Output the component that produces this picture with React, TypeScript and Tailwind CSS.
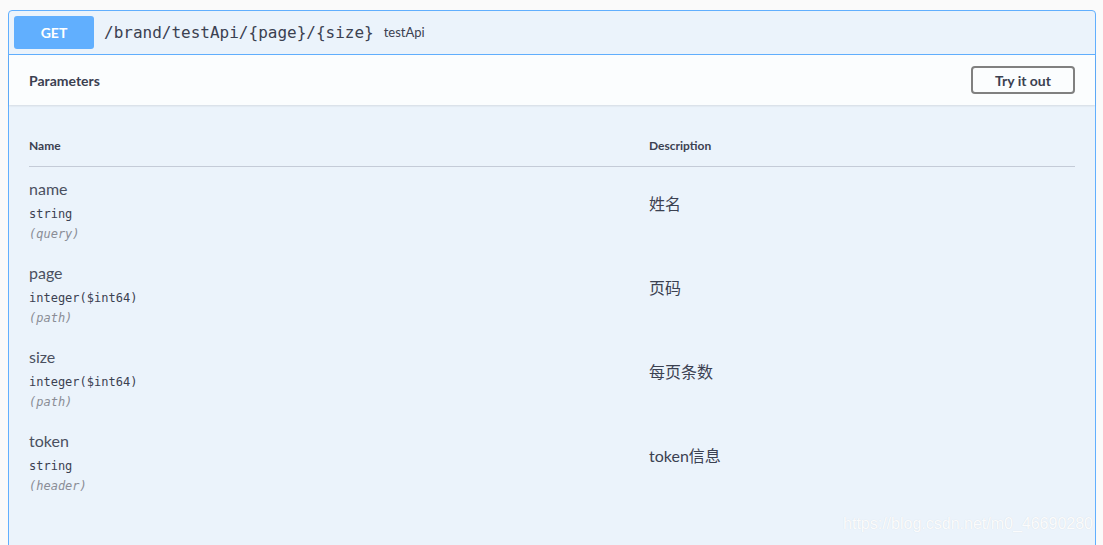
import React from "react";

const params = [
  { name: "name", type: "string", where: "(query)", desc: "姓名" },
  { name: "page", type: "integer($int64)", where: "(path)", desc: "页码" },
  { name: "size", type: "integer($int64)", where: "(path)", desc: "每页条数" },
  { name: "token", type: "string", where: "(header)", desc: "token信息" },
];

const sans = "font-['Lato','Noto_Sans_CJK_SC',sans-serif]";
const mono = "font-['DejaVu_Sans_Mono','Liberation_Mono',monospace]";

const App = () => {
  return (
    <div className={`relative h-[545px] overflow-hidden bg-[#fafafa] pt-[10px] pl-[8px] pr-[7px] ${sans} text-[#3b4151]`}>
      <div className="rounded-[4px] border border-[#61affe] bg-[#ebf3fb]">
        {/* summary */}
        <div className="flex items-center border-b border-[#61affe] p-[5px]">
          <div className="flex h-[33px] w-[80px] items-center justify-center rounded-[3px] bg-[#61affe] text-[14px] font-bold text-white">
            GET
          </div>
          <span className={`px-[10px] text-[16px] ${mono} text-[#3b4151]`}>/brand/testApi/{"{page}"}/{"{size}"}</span>
          <span className="text-[13px] text-[#3b4151]">testApi</span>
        </div>

        {/* section header */}
        <div className="flex h-[50px] items-center justify-between bg-white/80 px-[20px] shadow-[0_1px_2px_rgba(0,0,0,0.1)]">
          <h4 className="text-[14px] font-bold">Parameters</h4>
          <button className="h-[28px] w-[104px] rounded-[4px] border-2 border-[#808080] text-[14px] font-bold text-[#3b4151]">
            Try it out
          </button>
        </div>

        {/* table */}
        <div className="px-[20px] pt-[20px] pb-[60px]">
          <div className="flex border-b border-[#c4cbd7] pt-[13px] pb-[13px] text-[12px] font-bold leading-[15px]">
            <div className="w-[620px]">Name</div>
            <div>Description</div>
          </div>
          {params.map((p) => (
            <div key={p.name} className="flex h-[84px] pt-[12px]">
              <div className="w-[620px]">
                <div className="text-[16px] leading-[20px] text-[#4a5060]">{p.name}</div>
                <div className={`mt-[5px] text-[12px] leading-[20px] ${mono}`}>{p.type}</div>
                <div className={`text-[12px] leading-[20px] italic text-[#8a8d96] ${mono}`}>{p.where}</div>
              </div>
              <div className="pt-[13px] text-[16px] leading-[24px]">{p.desc}</div>
            </div>
          ))}
        </div>
      </div>

      <div className="absolute right-[10px] bottom-[9px] font-['Liberation_Sans',sans-serif] text-[16px] text-white/90 [text-shadow:0_0_1px_rgba(0,0,0,0.12)]">
        https://blog.csdn.net/m0_46690280
      </div>
    </div>
  );
};

export default App;
